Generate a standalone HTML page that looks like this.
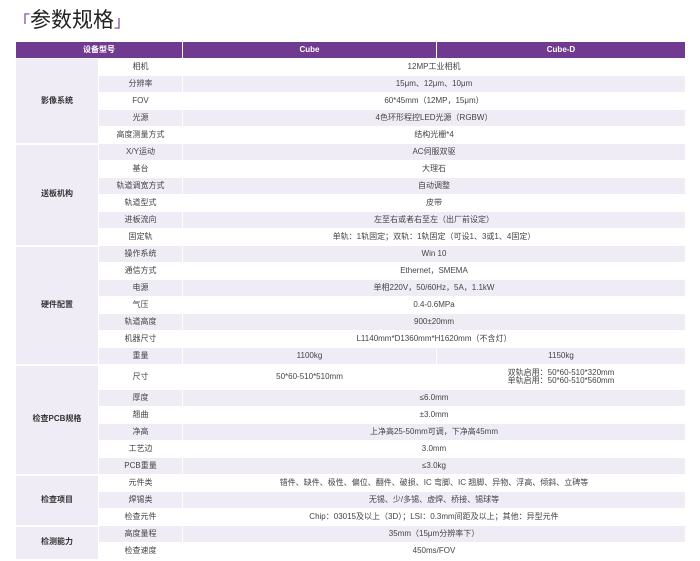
<!DOCTYPE html><html><head><meta charset="utf-8"><style>
body{margin:0;width:700px;height:560px;overflow:hidden;background:#fff;font-family:"Liberation Sans","Noto Sans CJK SC",sans-serif;}
h1{position:absolute;left:14px;top:4px;margin:0;font-weight:normal;font-size:21px;color:#222;font-family:"Noto Sans CJK SC",sans-serif;}
h1 span{color:#7a3f98;font-size:16px;}
table{position:absolute;left:15px;top:41px;width:670px;border-collapse:collapse;table-layout:fixed;}
td,th{border:1px solid #fff;text-align:center;font-size:8px;color:#444;padding:0;height:16px;line-height:8.5px;font-family:"Liberation Sans","Noto Sans CJK SC",sans-serif;}
th{background:#6f3a8f;color:#fff;font-weight:bold;height:16px;}
td.g{background:#efecf6;font-weight:bold;color:#333;border-bottom:2px solid #fff;}
tr.s td{background:#efecf6;}
</style></head><body>
<h1><span>「</span>参数规格<span>」</span></h1>
<table>
<colgroup><col style="width:83px"><col style="width:84px"><col style="width:254px"><col style="width:249px"></colgroup>
<tr><th colspan="2">设备型号</th><th>Cube</th><th>Cube-D</th></tr>
<tr><td class="g" rowspan="5">影像系统</td><td>相机</td><td colspan="2">12MP工业相机</td></tr>
<tr class="s"><td>分辨率</td><td colspan="2">15μm、12μm、10μm</td></tr>
<tr><td>FOV</td><td colspan="2">60*45mm（12MP，15μm）</td></tr>
<tr class="s"><td>光源</td><td colspan="2">4色环形程控LED光源（RGBW）</td></tr>
<tr><td>高度测量方式</td><td colspan="2">结构光栅*4</td></tr>
<tr class="s"><td class="g" rowspan="6">送板机构</td><td>X/Y运动</td><td colspan="2">AC伺服双驱</td></tr>
<tr><td>基台</td><td colspan="2">大理石</td></tr>
<tr class="s"><td>轨道调宽方式</td><td colspan="2">自动调整</td></tr>
<tr><td>轨道型式</td><td colspan="2">皮带</td></tr>
<tr class="s"><td>进板流向</td><td colspan="2">左至右或者右至左（出厂前设定）</td></tr>
<tr><td>固定轨</td><td colspan="2">单轨：1轨固定；双轨：1轨固定（可设1、3或1、4固定）</td></tr>
<tr class="s"><td class="g" rowspan="7">硬件配置</td><td>操作系统</td><td colspan="2">Win 10</td></tr>
<tr><td>通信方式</td><td colspan="2">Ethernet，SMEMA</td></tr>
<tr class="s"><td>电源</td><td colspan="2">单相220V，50/60Hz，5A，1.1kW</td></tr>
<tr><td>气压</td><td colspan="2">0.4-0.6MPa</td></tr>
<tr class="s"><td>轨道高度</td><td colspan="2">900±20mm</td></tr>
<tr><td>机器尺寸</td><td colspan="2">L1140mm*D1360mm*H1620mm（不含灯）</td></tr>
<tr class="s"><td>重量</td><td>1100kg</td><td>1150kg</td></tr>
<tr><td class="g" rowspan="6">检查PCB规格</td><td style="height:24px">尺寸</td><td>50*60-510*510mm</td><td>双轨启用：50*60-510*320mm<br>单轨启用：50*60-510*560mm</td></tr>
<tr class="s"><td>厚度</td><td colspan="2">≤6.0mm</td></tr>
<tr><td>翘曲</td><td colspan="2">±3.0mm</td></tr>
<tr class="s"><td>净高</td><td colspan="2">上净高25-50mm可调，下净高45mm</td></tr>
<tr><td>工艺边</td><td colspan="2">3.0mm</td></tr>
<tr class="s"><td>PCB重量</td><td colspan="2">≤3.0kg</td></tr>
<tr><td class="g" rowspan="3">检查项目</td><td>元件类</td><td colspan="2">错件、缺件、极性、偏位、翻件、破损、IC 弯脚、IC 翘脚、异物、浮高、倾斜、立碑等</td></tr>
<tr class="s"><td>焊锡类</td><td colspan="2">无锡、少/多锡、虚焊、桥接、锡球等</td></tr>
<tr><td>检查元件</td><td colspan="2">Chip：03015及以上（3D）；LSI：0.3mm间距及以上；其他：异型元件</td></tr>
<tr class="s"><td class="g" rowspan="2">检测能力</td><td>高度量程</td><td colspan="2">35mm（15μm分辨率下）</td></tr>
<tr><td>检查速度</td><td colspan="2">450ms/FOV</td></tr>
</table>
</body></html>
